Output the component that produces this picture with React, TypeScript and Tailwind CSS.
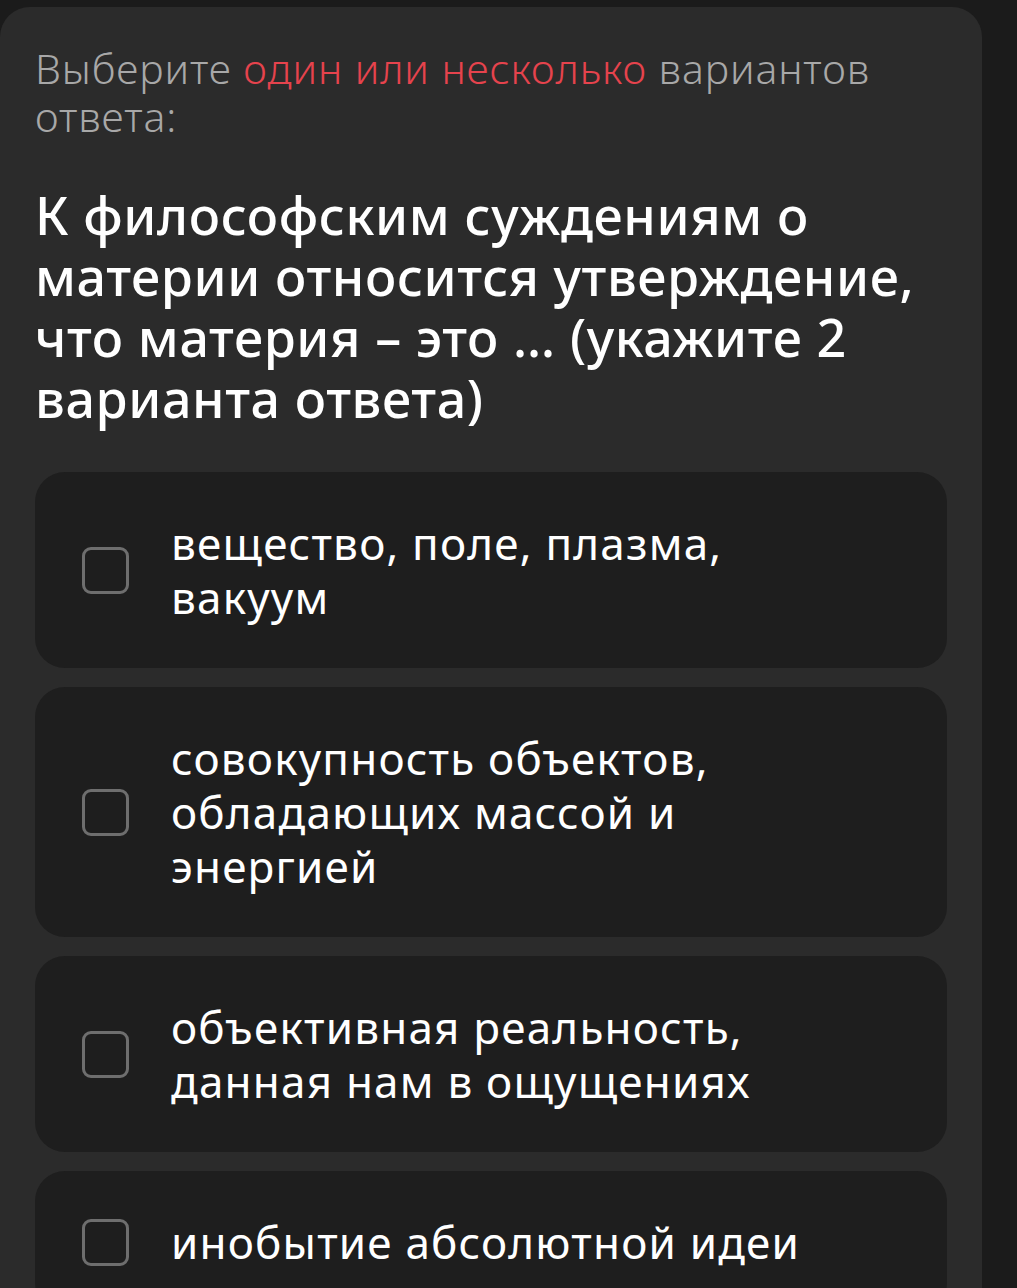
const options = [
  ['вещество, поле, плазма,', 'вакуум'],
  ['совокупность объектов,', 'обладающих массой и', 'энергией'],
  ['объективная реальность,', 'данная нам в ощущениях'],
  ['инобытие абсолютной идеи'],
];

function Option({ lines }: { lines: string[] }) {
  return (
    <label className="flex items-center gap-[42px] rounded-[30px] bg-[#1e1e1e] py-[44px] pl-[47px] pr-[40px]">
      <span className="h-[47px] w-[47px] shrink-0 rounded-[9px] border-[3px] border-[#6e6e6e]" />
      <span className="text-[44px] leading-[54px] tracking-[1.2px] text-white">
        {lines.map((l, i) => (
          <span key={i} className="block whitespace-nowrap">
            {l}
          </span>
        ))}
      </span>
    </label>
  );
}

export default function App() {
  return (
    <div
      className="min-h-screen bg-[#1b1b1b] pr-[35px] pt-[7px]"
      style={{ fontFamily: '"Noto Sans", "Open Sans", sans-serif' }}
    >
      <div className="rounded-[30px] bg-[#2b2b2b] px-[35px] pb-[40px] pt-[37px]">
        {/* instruction */}
        <p className="whitespace-nowrap text-[41px] font-light leading-[48px] tracking-[0.9px] text-[#a8a8a8]">
          Выберите <span className="text-[#e6434d]">один или несколько</span> вариантов
          <br />
          ответа:
        </p>

        {/* question */}
        <h1 className="mt-[44px] text-[52px] font-medium leading-[61px] tracking-[0.6px] text-white">
          <span className="block whitespace-nowrap">К философским суждениям о</span>
          <span className="block whitespace-nowrap">материи относится утверждение,</span>
          <span className="block whitespace-nowrap">что материя – это … (укажите 2</span>
          <span className="block whitespace-nowrap">варианта ответа)</span>
        </h1>

        {/* answers */}
        <div className="mt-[44px] flex flex-col gap-[19px]">
          {options.map((o, i) => (
            <Option key={i} lines={o} />
          ))}
        </div>
      </div>
    </div>
  );
}
